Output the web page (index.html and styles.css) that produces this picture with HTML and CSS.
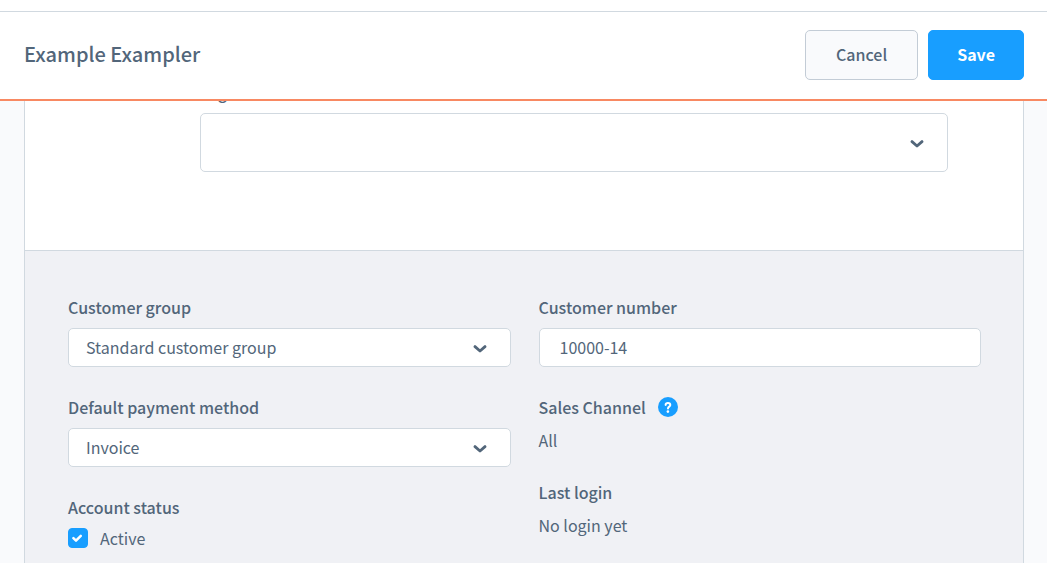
FILE: index.html
```html
<!DOCTYPE html>
<html lang="en">
<head>
<meta charset="utf-8">
<title>Example Exampler</title>
<link rel="stylesheet" href="styles.css">
</head>
<body>
<header class="smart-bar">
  <h1 class="smart-bar-title">Example Exampler</h1>
  <div class="smart-bar-actions">
    <button class="button" type="button">Cancel</button>
    <button class="button button-primary" type="submit" form="customer">Save</button>
  </div>
</header>
<main class="content">
  <form class="card" id="customer">
    <section class="tags-section">
      <div class="field">
        <label class="label" for="tags">Tags</label>
        <div class="select-wrap">
          <select class="control control-large" id="tags"><option></option></select>
          <svg class="chevron" viewBox="0 0 14 8" aria-hidden="true"><path d="M2 1.6 7 6 12 1.6"/></svg>
        </div>
      </div>
    </section>
    <section class="details">
      <div class="column">
        <div class="field">
          <label class="label" for="group">Customer group</label>
          <div class="select-wrap">
            <select class="control" id="group"><option>Standard customer group</option></select>
            <svg class="chevron" viewBox="0 0 14 8" aria-hidden="true"><path d="M2 1.6 7 6 12 1.6"/></svg>
          </div>
        </div>
        <div class="field">
          <label class="label" for="payment">Default payment method</label>
          <div class="select-wrap">
            <select class="control" id="payment"><option>Invoice</option></select>
            <svg class="chevron" viewBox="0 0 14 8" aria-hidden="true"><path d="M2 1.6 7 6 12 1.6"/></svg>
          </div>
        </div>
        <div class="field">
          <span class="label">Account status</span>
          <div class="check-row">
            <span class="check-wrap">
              <input class="checkbox" type="checkbox" id="active" checked>
              <svg class="check-mark" viewBox="0 0 20 20" aria-hidden="true"><path d="M5.4 10.2 8 12.7 12.8 7.8"/></svg>
            </span>
            <label for="active">Active</label>
          </div>
        </div>
      </div>
      <div class="column">
        <div class="field">
          <label class="label" for="number">Customer number</label>
          <input class="control control-text" type="text" id="number" value="10000-14">
        </div>
        <div class="field">
          <div class="label label-help">
            <span>Sales Channel</span>
            <button class="help" type="button" aria-label="Help">
              <svg viewBox="0 0 20 20" aria-hidden="true"><circle class="help-disc" cx="10" cy="10" r="10"/><path class="help-stroke" d="M7.6 7.9C7.7 6.7 8.6 6 9.9 6c1.4 0 2.4.8 2.4 1.9 0 1.7-2.3 1.7-2.3 3.5"/><circle class="help-dot" cx="9.9" cy="14.6" r="1.3"/></svg>
            </button>
          </div>
          <div class="value">All</div>
        </div>
        <div class="field">
          <div class="label">Last login</div>
          <div class="value">No login yet</div>
        </div>
      </div>
    </section>
  </form>
</main>
</body>
</html>
```

FILE: styles.css
```css
* {
  box-sizing: border-box;
}

body {
  margin: 0;
  padding-top: 11px;
  height: 100vh;
  display: flex;
  flex-direction: column;
  overflow: hidden;
  background: #fff;
  color: #52667a;
  font: 400 16px/24px "Noto Sans CJK SC", sans-serif;
}

button,
input,
select {
  font: inherit;
  color: inherit;
}

.smart-bar {
  display: flex;
  align-items: center;
  justify-content: space-between;
  padding: 18px 23px 19px 24px;
  border-top: 1px solid #d1d9e0;
  border-bottom: 2px solid #f88962;
  background: #fff;
}

.smart-bar-title {
  margin: 0;
  padding-bottom: 2px;
  font-size: 20px;
  font-weight: 500;
  line-height: 32px;
}

.smart-bar-actions {
  display: flex;
  gap: 10px;
}

.button {
  height: 50px;
  padding: 0 30px 2px;
  border: 1px solid #c3ccd6;
  border-radius: 5px;
  background: #f9fafc;
  font-weight: 500;
}

.button-primary {
  padding: 0 28px 2px;
  border-color: #189eff;
  background: #189eff;
  color: #fff;
  font-weight: 700;
}

.content {
  flex: 1;
  overflow: hidden;
  padding: 0 23px 0 24px;
  background: #f9fafc;
}

.card {
  margin-top: -25px;
  border: 1px solid #d1d9e0;
  background: #fff;
}

.tags-section {
  padding: 4px 75px 78px 175px;
}

.details {
  display: grid;
  grid-template-columns: 1fr 1fr;
  gap: 28px;
  min-height: 400px;
  padding: 45px 42px 45px 43px;
  border-top: 1px solid #d1d9e0;
  background: #f0f1f5;
}

.column {
  display: flex;
  flex-direction: column;
  gap: 29px;
}

.field {
  display: flex;
  flex-direction: column;
  gap: 10px;
}

.label {
  font-weight: 500;
  line-height: 22px;
}

.label-help {
  display: flex;
  align-items: center;
  gap: 12px;
}

.select-wrap {
  position: relative;
  display: flex;
}

.control {
  width: 100%;
  height: 39px;
  padding: 0 48px 2px 17px;
  border: 1px solid #d1d9e0;
  border-radius: 5px;
  background: #fff;
  appearance: none;
}

.control-large {
  height: 59px;
}

.control-text {
  padding: 0 20px 2px;
}

.chevron {
  position: absolute;
  top: 50%;
  right: 24px;
  width: 14px;
  height: 8px;
  margin-top: -3px;
  fill: none;
  stroke: #52667a;
  stroke-width: 2.8;
  stroke-linecap: round;
  stroke-linejoin: round;
  pointer-events: none;
}

.check-row {
  display: flex;
  align-items: center;
  gap: 12px;
  height: 20px;
}

.check-wrap {
  position: relative;
  display: flex;
}

.checkbox {
  width: 20px;
  height: 20px;
  margin: 0;
  border: 1px solid #d1d9e0;
  border-radius: 4px;
  background: #fff;
  appearance: none;
}

.checkbox:checked {
  border-color: #189eff;
  background: #189eff;
}

.check-mark {
  position: absolute;
  inset: 0;
  fill: none;
  stroke: #fff;
  stroke-width: 2.5;
  stroke-linecap: round;
  stroke-linejoin: round;
  pointer-events: none;
}

.help {
  display: flex;
  width: 20px;
  height: 20px;
  padding: 0;
  border: 0;
  background: none;
}

.help-disc {
  fill: #189eff;
}

.help-stroke {
  fill: none;
  stroke: #fff;
  stroke-width: 2;
  stroke-linecap: round;
}

.help-dot {
  fill: #fff;
}
```
